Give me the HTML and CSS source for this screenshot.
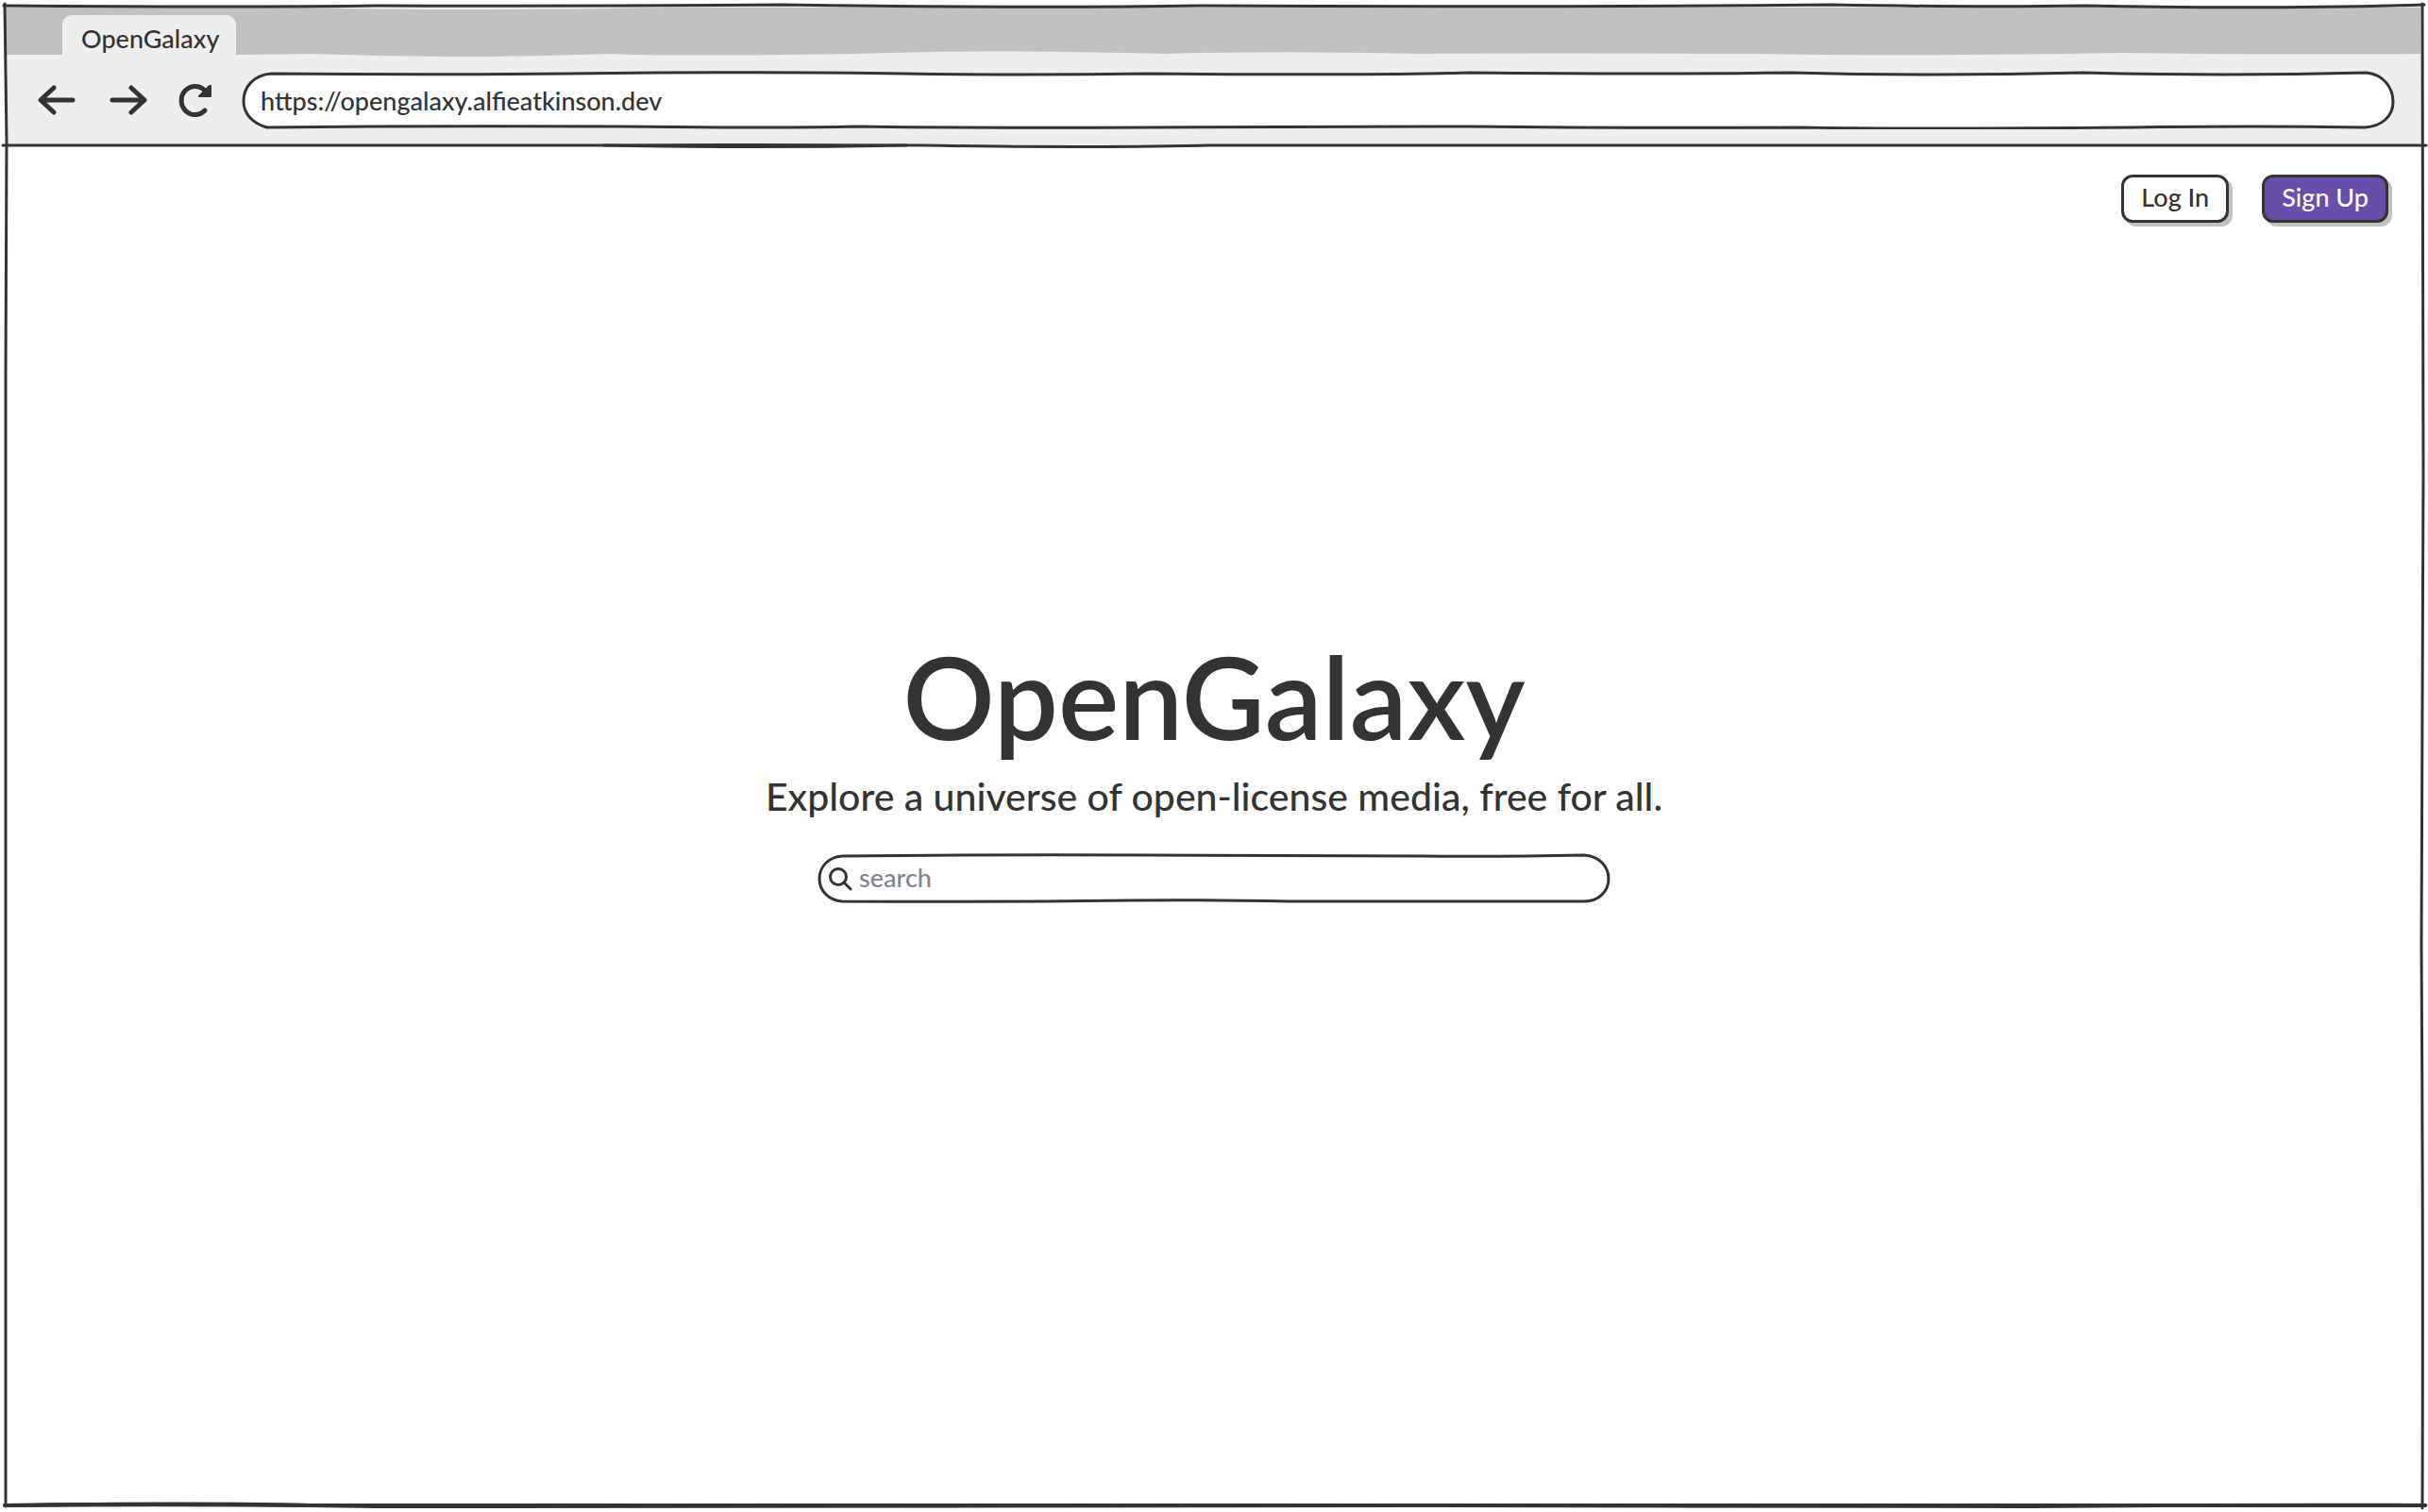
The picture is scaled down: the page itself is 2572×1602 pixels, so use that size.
FILE: index.html
```html
<!DOCTYPE html>
<html lang="en">
<head>
<meta charset="utf-8">
<meta name="viewport" content="width=device-width, initial-scale=1">
<title>OpenGalaxy</title>
<link rel="stylesheet" href="styles.css">
</head>
<body>
<div class="window">
  <header class="chrome">
    <svg class="strip" viewBox="0 0 2560 54" preserveAspectRatio="none" aria-hidden="true">
      <path d="M0 2H320Q480 6 700 2H2558V51Q2420 52 2240 50Q2000 54 1860 51Q1600 50 1500 51Q1380 48 1260 50L1230 51Q1050 46 900 51Q700 54 640 51Q480 57 325 51L244 52H0Z"/>
    </svg>
    <div class="tabs"><a class="tab" href="#">OpenGalaxy</a></div>
    <div class="toolbar">
      <button class="nav" type="button" aria-label="Back"><svg viewBox="0 0 40 36"><path d="M37 18H4M17 5 3 18 17 31"/></svg></button>
      <button class="nav" type="button" aria-label="Forward"><svg viewBox="0 0 40 36"><path d="M3 18H36M23 5 37 18 23 31"/></svg></button>
      <button class="nav nav-reload" type="button" aria-label="Reload"><svg viewBox="0 0 40 36"><path d="M31 29A14.500 15 0 1 1 31 8"/><path class="solid" d="M36 3 25 14H37V3Z"/></svg></button>
      <div class="address">
        <svg class="outline" viewBox="0 0 2280 62" preserveAspectRatio="none" aria-hidden="true"><path d="M32 3Q230 5 440 2Q600 1 700 3Q830 5 960 3Q1200 5 1300 2Q1500 4 1640 2Q1790 6 1950 2Q2100 6 2250 2C2268 4 2278 18 2278 33S2266 59 2248 60Q2130 58 2000 60Q1760 62 1650 60Q1460 61 1300 59Q1000 60 960 60Q800 61 650 59Q580 61 400 59Q200 58 27 60C12 56 2 46 2 32S12 4 32 3Z"/></svg>
        <input type="text" aria-label="Address" value="https://opengalaxy.alfieatkinson.dev">
      </div>
    </div>
  </header>
  <main class="page">
    <nav class="account">
      <button class="btn" type="button">Log In</button>
      <button class="btn btn-primary" type="button">Sign Up</button>
    </nav>
    <section class="hero">
      <h1>OpenGalaxy</h1>
      <p>Explore a universe of open-license media, free for all.</p>
      <form class="search" role="search">
        <svg class="outline" viewBox="0 0 840 54" preserveAspectRatio="none" aria-hidden="true"><path d="M26 3Q200 1 350 2Q500 2 640 3Q720 4 812 2C828 3 838 14 838 27S828 51 812 51H500Q400 49 330 50Q180 52 26 51C12 50 2 40 2 27S12 4 26 3Z"/></svg>
        <svg class="glass" viewBox="0 0 26 26" aria-hidden="true"><path d="M17 17 24 24"/><circle cx="11" cy="11" r="8.500"/></svg>
        <input type="search" aria-label="Search" placeholder="search">
      </form>
    </section>
  </main>
  <svg class="rules rules-top" viewBox="0 0 2572 10" preserveAspectRatio="none" aria-hidden="true"><path d="M4 6Q250 8 400 6Q620 7 830 5Q1100 9 1270 6Q1600 8 1940 5Q2100 8 2210 6Q2400 10 2568 5"/></svg>
  <svg class="rules rules-mid" viewBox="0 0 2572 10" preserveAspectRatio="none" aria-hidden="true"><path d="M3 5H640Q780 4 980 5Q1140 8 1280 5Q2000 6 2570 5"/><path d="M640 5Q800 8 960 5"/></svg>
  <svg class="rules rules-bottom" viewBox="0 0 2572 10" preserveAspectRatio="none" aria-hidden="true"><path d="M5 5Q200 2 330 5Q1000 4 1500 5Q2000 6 2200 5H2569"/><path d="M5 5Q200 3 400 6Q1000 5 1500 5Q1900 6 2150 6Q2400 4 2569 5"/></svg>
  <svg class="rules rules-left" viewBox="0 0 10 1602" preserveAspectRatio="none" aria-hidden="true"><path d="M5 4L7 150Q7 220 6 400Q7 800 6 1000Q5 1300 6 1596"/></svg>
  <svg class="rules rules-right" viewBox="0 0 10 1602" preserveAspectRatio="none" aria-hidden="true"><path d="M4 4L5 500Q4 800 3 1000Q5 1300 4 1598"/></svg>
</div>
</body>
</html>
```
FILE: styles.css
```css
:root {
  --ink: #333;
  --strip: #c1c1c1;
  --chrome: #eee;
  --purple: #684ea8;
}
* { box-sizing: border-box; }
body {
  margin: 0;
  background: #fff;
  color: var(--ink);
  font-family: Lato, "Open Sans", sans-serif;
  font-size: 27px;
  font-weight: 500;
  line-height: 32px;
}
button, input { font: inherit; color: inherit; }
svg {
  fill: none;
  stroke: var(--ink);
  stroke-linecap: round;
  stroke-linejoin: round;
}
.window {
  position: relative;
  display: flex;
  flex-direction: column;
  min-height: 100vh;
  padding: 6px;
}
.chrome {
  position: relative;
  background: var(--chrome);
}
.strip {
  position: absolute;
  inset: 0 0 auto;
  width: 100%;
  height: 54px;
  fill: var(--strip);
  stroke: none;
}
.tabs {
  position: relative;
  display: flex;
  padding: 10px 60px 0;
}
.tab {
  padding: 9px 18px 3px 20px;
  border-radius: 10px 10px 0 0;
  background: var(--chrome);
  color: inherit;
  text-decoration: none;
}
.toolbar {
  display: flex;
  align-items: center;
  gap: 36px;
  padding: 15px 29px 17px 34px;
}
.nav {
  display: flex;
  padding: 0;
  border: 0;
  background: none;
}
.nav svg { width: 40px; height: 36px; stroke-width: 5; }
.nav-reload { margin: 0 -6px; }
.nav .solid { fill: var(--ink); stroke-width: 2; }
.address {
  position: relative;
  flex: 1;
  height: 62px;
}
.outline {
  position: absolute;
  inset: 0;
  width: 100%;
  height: 100%;
  fill: #fff;
  stroke-width: 3;
}
.outline path, .rules path { vector-effect: non-scaling-stroke; }
input {
  position: relative;
  width: 100%;
  height: 100%;
  border: 0;
  outline: 0;
  background: none;
}
.address input { padding: 0 20px; }
.page {
  flex: 1;
  display: flex;
  flex-direction: column;
  padding: 31px 36px;
}
.account {
  display: flex;
  justify-content: flex-end;
  gap: 35px;
}
.btn {
  height: 51px;
  padding: 0 18px 4px;
  border: 3px solid var(--ink);
  border-radius: 12px;
  background: #fff;
  box-shadow: 4px 4px 0 #c1c1c1;
}
.btn-primary { background: var(--purple); color: #fff; }
.hero {
  flex: 1;
  display: flex;
  flex-direction: column;
  align-items: center;
  justify-content: center;
  padding-bottom: 178px;
}
h1 {
  margin: 0 0 10px;
  font-size: 121px;
  line-height: 144px;
  font-weight: 600;
}
p {
  margin: 0 0 36px;
  font-size: 41px;
  line-height: 48px;
}
.search {
  position: relative;
  display: flex;
  align-items: center;
  gap: 7px;
  width: 840px;
  max-width: 100%;
  height: 54px;
  padding: 0 20px 0 11px;
}
.glass {
  position: relative;
  flex: none;
  width: 26px;
  height: 26px;
  stroke-width: 3;
}
.search input { padding: 0 0 2px; appearance: none; }
.search input::placeholder { color: #83828f; opacity: 1; }
.rules { position: absolute; stroke-width: 3; pointer-events: none; }
.rules-top { top: 0; left: 0; width: 100%; height: 10px; }
.rules-mid { top: 149px; left: 0; width: 100%; height: 10px; }
.rules-bottom { bottom: 2px; left: 0; width: 100%; height: 10px; stroke-width: 4; }
.rules-left { top: 0; left: 0; width: 10px; height: 100%; }
.rules-right { top: 0; right: 0; width: 10px; height: 100%; }
```
